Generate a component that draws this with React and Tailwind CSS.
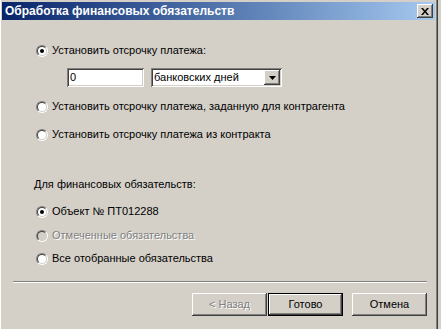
import React from "react";

const raised =
  "shadow-[inset_-1px_-1px_#404040,inset_1px_1px_#ffffff,inset_-2px_-2px_#808080,inset_2px_2px_#d4d0c8]";
const sunken =
  "shadow-[inset_1px_1px_#808080,inset_-1px_-1px_#ffffff,inset_2px_2px_#404040,inset_-2px_-2px_#d4d0c8]";

function Radio({ checked, disabled }) {
  return (
    <span className="w-[12px] h-[12px] rounded-full border border-t-[#808080] border-l-[#808080] border-r-white border-b-white shrink-0">
      <span
        className={`flex items-center justify-center w-full h-full rounded-full border border-t-[#404040] border-l-[#404040] border-r-[#d4d0c8] border-b-[#d4d0c8] ${
          disabled ? "bg-[#d4d0c8]" : "bg-white"
        }`}
      >
        {checked && <span className="w-[4px] h-[4px] rounded-full bg-black" />}
      </span>
    </span>
  );
}

function Option({ label, checked, disabled, className = "" }) {
  return (
    <div className={`flex items-center h-[13px] gap-[4px] ${className}`}>
      <Radio checked={checked} disabled={disabled} />
      <span
        className={
          disabled
            ? "text-[#808080] [text-shadow:1px_1px_0_#ffffff]"
            : "text-black"
        }
      >
        {label}
      </span>
    </div>
  );
}

function Button({ children, primary, disabled }) {
  return (
    <div
      className={`w-[75px] h-[23px] flex items-center justify-center ${
        primary ? "border border-black" : ""
      }`}
    >
      <div
        className={`w-full h-full flex items-center justify-center ${raised} ${
          disabled ? "text-[#808080] [text-shadow:1px_1px_0_#ffffff]" : "text-black"
        }`}
      >
        {children}
      </div>
    </div>
  );
}

export default function App() {
  return (
    <div
      className="w-[441px] h-[329px] bg-[#d4d0c8] flex text-[11px] leading-[13px] overflow-hidden"
      style={{ fontFamily: '"Liberation Sans", Arial, sans-serif' }}
    >
      <div className="w-[437px] h-full flex flex-col border-l border-white border-r border-r-[#808080]">
        {/* Title bar */}
        <div className="mt-[2px] ml-[1px] mr-[1px] h-[18px] flex items-center bg-gradient-to-r from-[#0a246a] to-[#a6caf0] pl-[3px] pr-[2px]">
          <span className="text-white font-bold text-[12px]">
            Обработка финансовых обязательств
          </span>
          <div className={`ml-auto w-[16px] h-[14px] bg-[#d4d0c8] flex items-center justify-center ${raised}`}>
            <svg width="8" height="7" viewBox="0 0 8 7">
              <path d="M0 0h2l2 2.5L6 0h2L5 3.5 8 7H6L4 4.5 2 7H0l3-3.5z" fill="#000" />
            </svg>
          </div>
        </div>

        {/* Body */}
        <div className="pl-[35px] flex flex-col">
          <Option className="mt-[24px]" checked label="Установить отсрочку платежа:" />

          <div className="flex mt-[11px] ml-[31px] gap-[7px]">
            <div className={`w-[77px] h-[19px] bg-white ${sunken} flex items-center pl-[3px]`}>
              0
            </div>
            <div className={`w-[131px] h-[19px] bg-white ${sunken} flex items-center pl-[3px] pr-[2px]`}>
              <span>банковских дней</span>
              <div className={`ml-auto w-[16px] h-[15px] bg-[#d4d0c8] flex items-center justify-center ${raised}`}>
                <svg width="7" height="4" viewBox="0 0 7 4">
                  <path d="M0 0h7L3.5 4z" fill="#000" />
                </svg>
              </div>
            </div>
          </div>

          <Option className="mt-[13px]" label="Установить отсрочку платежа, заданную для контрагента" />
          <Option className="mt-[15px]" label="Установить отсрочку платежа из контракта" />

          <div className="mt-[37px] -ml-[2px] h-[13px]">Для финансовых обязательств:</div>

          <Option className="mt-[14px]" checked label="Объект № ПТ012288" />
          <Option className="mt-[11px]" disabled label="Отмеченные обязательства" />
          <Option className="mt-[10px]" label="Все отобранные обязательства" />
        </div>

        <div className="mt-[16px] ml-[12px] mr-[9px] h-[2px] border-t border-[#808080] border-b border-b-white" />

        <div className="flex justify-end mt-[10px] mr-[9px]">
          <Button disabled>&lt; Назад</Button>
          <div className="ml-[1px]">
            <Button primary>Готово</Button>
          </div>
          <div className="ml-[9px]">
            <Button>Отмена</Button>
          </div>
        </div>
      </div>
      <div className="w-px h-full bg-[#404040]" />
      <div className="flex-1 h-full bg-[#d4d0c8]" />
    </div>
  );
}
